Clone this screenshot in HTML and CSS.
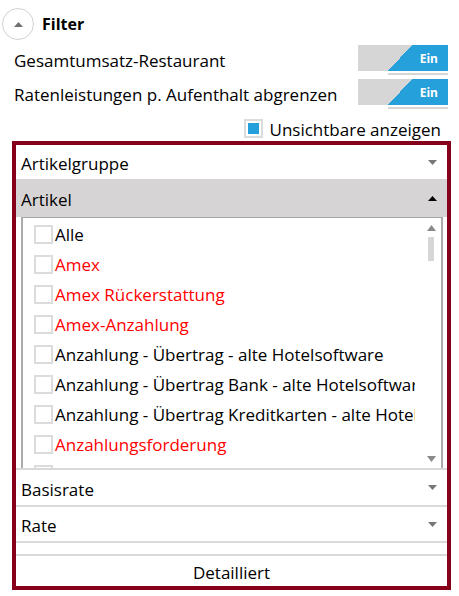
FILE: index.html
```html
<!DOCTYPE html>
<html lang="de">
<head>
<meta charset="utf-8">
<title>Filter</title>
<link rel="stylesheet" href="styles.css">
</head>
<body>
<div class="page">
  <div class="filter-head">
    <button class="collapse-btn" type="button"><svg width="9" height="5" viewBox="0 0 9 5"><path d="M0 5 L4.5 0 L9 5Z" fill="#707070"/></svg></button>
    <span class="filter-title">Filter</span>
  </div>

  <div class="option-row">
    <span class="option-label">Gesamtumsatz-Restaurant</span>
    <div class="toggle"><div class="toggle-face"><span>Ein</span></div><div class="toggle-track"></div></div>
  </div>
  <div class="option-row second">
    <span class="option-label">Ratenleistungen p. Aufenthalt abgrenzen</span>
    <div class="toggle"><div class="toggle-face"><span>Ein</span></div><div class="toggle-track"></div></div>
  </div>

  <div class="show-hidden">
    <span class="chk chk-on"></span>
    <span class="show-label">Unsichtbare anzeigen</span>
  </div>

  <div class="panel">
    <div class="acc-head first">
      <span>Artikelgruppe</span>
      <svg class="caret" width="9" height="5" viewBox="0 0 9 5"><path d="M0 0 L9 0 L4.5 5Z" fill="#777"/></svg>
    </div>
    <div class="acc-head open">
      <span>Artikel</span>
      <svg class="caret" width="9" height="5" viewBox="0 0 9 5"><path d="M0 5 L4.5 0 L9 5Z" fill="#000"/></svg>
    </div>
    <div class="list">
      <div class="list-items">
        <div class="item"><span class="chk"></span><span class="item-text">Alle</span></div>
        <div class="item red"><span class="chk"></span><span class="item-text">Amex</span></div>
        <div class="item red"><span class="chk"></span><span class="item-text">Amex Rückerstattung</span></div>
        <div class="item red"><span class="chk"></span><span class="item-text">Amex-Anzahlung</span></div>
        <div class="item"><span class="chk"></span><span class="item-text">Anzahlung - Übertrag - alte Hotelsoftware</span></div>
        <div class="item"><span class="chk"></span><span class="item-text">Anzahlung - Übertrag Bank - alte Hotelsoftware</span></div>
        <div class="item"><span class="chk"></span><span class="item-text">Anzahlung - Übertrag Kreditkarten - alte Hotelsoftware</span></div>
        <div class="item red"><span class="chk"></span><span class="item-text">Anzahlungsforderung</span></div>
        <div class="item"><span class="chk"></span><span class="item-text">Ausbuchungen</span></div>
      </div>
      <div class="scrollbar">
        <svg class="sb-up" width="9" height="6" viewBox="0 0 9 6"><path d="M0 6 L4.5 0 L9 6Z" fill="#8a8a8a"/></svg>
        <div class="thumb"></div>
        <div class="sb-space"></div>
        <svg class="sb-down" width="9" height="6" viewBox="0 0 9 6"><path d="M0 0 L9 0 L4.5 6Z" fill="#8a8a8a"/></svg>
      </div>
    </div>
    <div class="acc-head sep basis">
      <span>Basisrate</span>
      <svg class="caret" width="9" height="5" viewBox="0 0 9 5"><path d="M0 0 L9 0 L4.5 5Z" fill="#777"/></svg>
    </div>
    <div class="acc-head sep rate">
      <span>Rate</span>
      <svg class="caret" width="9" height="5" viewBox="0 0 9 5"><path d="M0 0 L9 0 L4.5 5Z" fill="#777"/></svg>
    </div>
    <div class="blank sep"></div>
    <div class="detail sep">Detailliert</div>
  </div>
</div>
</body>
</html>
```

FILE: styles.css
```css
* {
  box-sizing: border-box;
}

html, body {
  margin: 0;
  padding: 0;
  background: #ffffff;
}

body {
  font-family: "Open Sans", "Noto Sans", sans-serif;
  font-size: 17px;
  color: #000000;
}

.page {
  width: 459px;
  padding-top: 8px;
}

/* Filter header */
.filter-head {
  display: flex;
  align-items: center;
  gap: 8px;
  height: 32px;
  padding-left: 2px;
}

.collapse-btn {
  width: 32px;
  height: 32px;
  padding: 0;
  border: 1.5px solid #d2d2d2;
  border-radius: 50%;
  background: #ffffff;
  display: flex;
  align-items: center;
  justify-content: center;
}

.collapse-btn svg {
  display: block;
}

.filter-title {
  font-weight: 700;
  font-size: 16px;
}

/* Option rows with toggle */
.option-row {
  display: flex;
  justify-content: space-between;
  align-items: flex-start;
  padding-left: 14px;
  padding-right: 11px;
  margin-top: 5px;
}

.option-row.second {
  margin-top: 4px;
}

.option-label {
  height: 26px;
  line-height: 26px;
  padding-top: 3px;
  white-space: nowrap;
}

.toggle {
  width: 90px;
  display: flex;
  flex-direction: column;
}

.toggle-face {
  height: 26px;
  background: linear-gradient(132.7deg, #d6d6d6 39.7px, #26a0da 39.7px);
  display: flex;
  align-items: center;
  justify-content: flex-end;
  padding-right: 10px;
  color: #ffffff;
  font-weight: 700;
  font-size: 12px;
}

.toggle-track {
  height: 2px;
  margin-top: 2px;
  margin-left: 30px;
  background: #d6d6d6;
}

/* show hidden checkbox */
.show-hidden {
  display: flex;
  justify-content: flex-end;
  align-items: center;
  gap: 7px;
  margin-top: 10px;
  padding-right: 18px;
  height: 19px;
}

.show-label {
  padding-top: 2px;
}

.chk {
  flex: none;
  width: 19px;
  height: 19px;
  border: 2px solid #dcdcdc;
  background: #ffffff;
}

.chk-on {
  padding: 2px;
  background: #26a0da;
  background-clip: content-box;
}

/* Panel */
.panel {
  margin-top: 3px;
  margin-left: 12px;
  width: 439px;
  height: 449px;
  border: 4px solid #87001b;
  display: flex;
  flex-direction: column;
}

.acc-head {
  flex: none;
  height: 34px;
  display: flex;
  align-items: center;
  justify-content: space-between;
  padding-left: 5px;
  padding-right: 10px;
}

.acc-head span {
  padding-top: 3px;
}

.acc-head.open {
  height: 38px;
  background: #d6d4d5;
}

.caret {
  display: block;
}

.list {
  flex: none;
  height: 251px;
  margin: 0 4px 0 5px;
  border-top: 1px solid #a6a6a6;
  border-left: 2px solid #ababab;
  border-right: 2px solid #ababab;
  display: flex;
  overflow: hidden;
}

.list-items {
  flex: 1;
  min-width: 0;
  padding-top: 1px;
  padding-left: 11px;
  padding-right: 9px;
  overflow: hidden;
}

.item {
  height: 30px;
  display: flex;
  align-items: center;
  gap: 2px;
  white-space: nowrap;
  overflow: hidden;
}

.item.red {
  color: #ff0000;
}

.scrollbar {
  flex: none;
  width: 17px;
  display: flex;
  flex-direction: column;
  align-items: center;
  padding-right: 3px;
}

.sb-up {
  display: block;
  margin-top: 7px;
}

.thumb {
  width: 6px;
  height: 24px;
  margin-top: 6px;
  background: #d6d6d6;
}

.sb-space {
  flex: 1;
}

.sb-down {
  display: block;
  margin-bottom: 6px;
}

.sep {
  border-top: 2px solid #d9d9d9;
}

.acc-head.basis {
  height: 37px;
}

.acc-head.rate {
  height: 36px;
}

.blank {
  flex: none;
  height: 13px;
}

.detail {
  flex: 1;
  display: flex;
  align-items: center;
  justify-content: center;
  padding-top: 2px;
}
```
